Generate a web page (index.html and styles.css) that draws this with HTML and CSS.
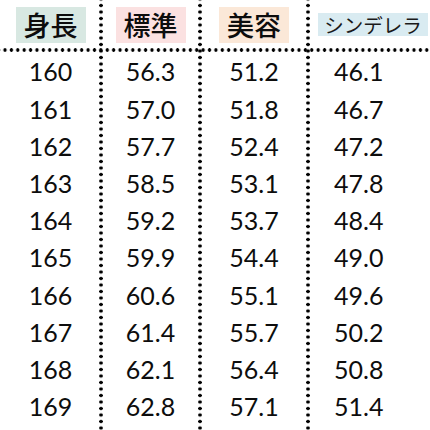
FILE: index.html
```html
<!DOCTYPE html>
<html lang="ja">
<head>
<meta charset="utf-8">
<title>身長別体重表</title>
<link rel="stylesheet" href="styles.css">
</head>
<body>
<div class="table">
  <div class="th"><span class="label label-height">身長</span></div>
  <div class="th"><span class="label label-std">標準</span></div>
  <div class="th"><span class="label label-beauty">美容</span></div>
  <div class="th th-small"><span class="label label-cin">シンデレラ</span></div>
  <div class="hline"></div>

  <div class="td">160</div><div class="td">56.3</div><div class="td">51.2</div><div class="td td-last">46.1</div>
  <div class="td">161</div><div class="td">57.0</div><div class="td">51.8</div><div class="td td-last">46.7</div>
  <div class="td">162</div><div class="td">57.7</div><div class="td">52.4</div><div class="td td-last">47.2</div>
  <div class="td">163</div><div class="td">58.5</div><div class="td">53.1</div><div class="td td-last">47.8</div>
  <div class="td">164</div><div class="td">59.2</div><div class="td">53.7</div><div class="td td-last">48.4</div>
  <div class="td">165</div><div class="td">59.9</div><div class="td">54.4</div><div class="td td-last">49.0</div>
  <div class="td">166</div><div class="td">60.6</div><div class="td">55.1</div><div class="td td-last">49.6</div>
  <div class="td">167</div><div class="td">61.4</div><div class="td">55.7</div><div class="td td-last">50.2</div>
  <div class="td">168</div><div class="td">62.1</div><div class="td">56.4</div><div class="td td-last">50.8</div>
  <div class="td">169</div><div class="td">62.8</div><div class="td">57.1</div><div class="td td-last">51.4</div>
</div>
</body>
</html>
```
FILE: styles.css
```css
html, body {
  margin: 0;
  padding: 0;
  background: #ffffff;
}

.table {
  width: 430px;
  height: 430px;
  display: grid;
  grid-template-columns: 101px 99px 108px 122px;
  grid-template-rows: 48px 4px repeat(10, 37.2px);
  color: #0d0d0d;
  background-image:
    radial-gradient(circle at 2px 3.25px, #000 1.5px, transparent 2px),
    radial-gradient(circle at 2px 3.25px, #000 1.5px, transparent 2px),
    radial-gradient(circle at 2px 3.25px, #000 1.5px, transparent 2px);
  background-size: 4px 6.5px;
  background-repeat: repeat-y;
  background-position: 99px 2.25px, 198px 2.25px, 306px 2.25px;
  overflow: hidden;
}

.th {
  display: flex;
  justify-content: center;
  align-items: flex-end;
  padding-bottom: 5px;
}

.th-small {
  align-items: center;
  padding-bottom: 0;
  padding-left: 8px;
}

.label {
  font-family: "Noto Sans CJK JP", "Noto Sans", sans-serif;
  font-weight: 500;
  font-size: 27px;
  line-height: 36px;
  padding: 0 8px;
}

.label-height { background: #d8e8e2; }
.label-std { background: #fbe1e1; }
.label-beauty { background: #fbe8d8; }

.label-cin {
  background: #d9ebf1;
  font-size: 19.5px;
  font-weight: 400;
  line-height: 23px;
  padding: 0 6px;
  color: #1a1a1a;
}

.hline {
  grid-column: 1 / -1;
  background-image: radial-gradient(circle at 3.2px 2px, #000 1.5px, transparent 2px);
  background-size: 6.4px 4px;
  background-repeat: repeat-x;
  background-position: 1.8px 0;
}

.td {
  display: flex;
  justify-content: center;
  align-items: center;
  padding-top: 2.8px;
  font-family: "Lato", "Noto Sans", sans-serif;
  font-size: 25px;
  line-height: 1;
}

.td-last {
  justify-content: flex-start;
  padding-left: 26px;
}
```
